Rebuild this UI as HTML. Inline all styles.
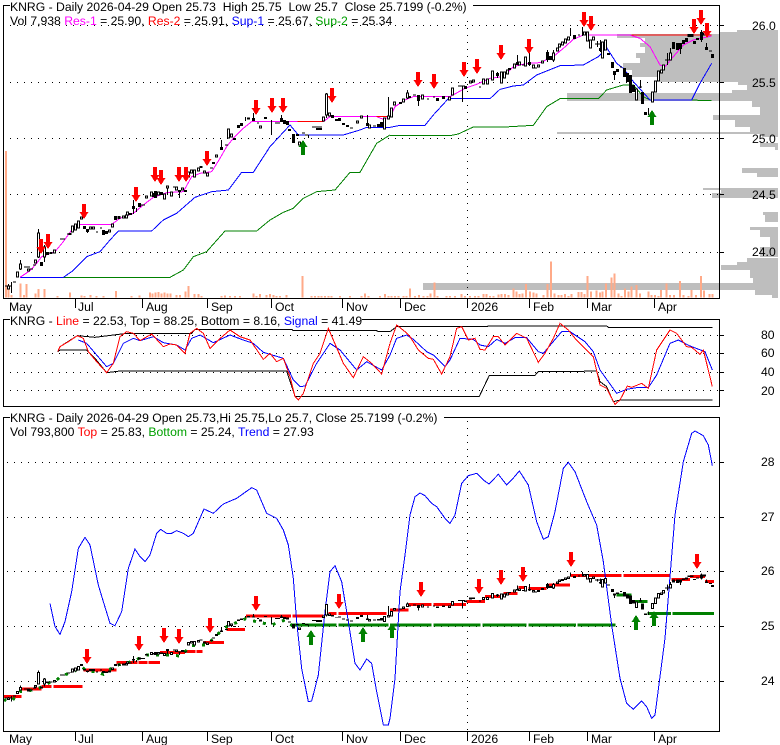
<!DOCTYPE html>
<html><head><meta charset="utf-8"><title>KNRG</title>
<style>
html,body{margin:0;padding:0;background:#fff}
svg{display:block}
text{font-family:"Liberation Sans",Arial,sans-serif;font-size:12.2px;fill:#000}
</style></head><body>
<svg xmlns="http://www.w3.org/2000/svg" width="780" height="745" viewBox="0 0 780 745" shape-rendering="crispEdges">
<defs>
<g id="candles">
<path fill="none" stroke="#000" stroke-width="1" vector-effect="non-scaling-stroke" d="M8.5 284V288M5 286H12M11.5 282V293M13 282H16M20.5 260V270M24 267H30M30 269H33M33 265H36M38.5 229V258M44.5 245V262M60 239H65M67 234H70M87.5 230V233M96 232H98M100 228H102M133.5 200V214M136.5 208V212M141 205H145M179.5 191V198M167.5 186V195M173 187H177M210 168H213M221.5 140V148M225 145H228M245.5 117V121M253.5 113V120M257 123H259M271.5 120V135M275 123H280M281.5 115V122M302 133H305M305 135H308M308.5 135V138M312 127H322M326.5 93V118M350 128H353M367.5 115V126M373 126H376M388.5 97V117M407.5 90V99M413 95H416M418.5 95V106M427 99H429M433 97H435M458 86H465M462.5 86V102M479 87H481M497.5 72V78M517.5 55V65M529.5 52V66M522 65H525M535 68H537M547.5 50V62M553.5 50V62M570.5 28V36M578 35H580M582.5 27V36M597.5 41V47M595 44H600M600.5 40V52M614.5 71V80M620 67H622M640.5 80V88M639 87H642M648.5 108V115M667.5 53V65M665 60H669M670.5 48V60M680.5 49V54M701.5 30V42M706.5 43V50M709 51H712"/>
<path fill="none" stroke="#000" stroke-width="3" d="M41.5 262V266M47.5 252V255M51 252V254M70 233V235M84.5 226V229M87.5 229V232M103.5 230V235M106.5 231V234M115.5 216V220M119 216V219M130.5 213V215M133.5 206V209M139.5 203V207M153.5 193V197M155.5 191V198M161.5 192V195M179.5 190V192M185.5 190V192M201 166V168M213.5 162V164M221.5 147V150M234.5 138V140M238.5 125V128M241.5 123V126M253.5 118V121M265.5 117V119M281.5 118V122M284.5 120V124M287.5 121V125M289.5 129V131M293.5 134V143M297.5 134V136M317.5 128V130M320.5 128V130M332.5 115V118M336.5 119V121M339.5 118V121M343.5 123V125M347.5 125V127M367.5 123V126M378.5 124V127M381.5 122V127M400.5 102V104M409.5 96V98M418.5 95V101M437.5 98V101M443.5 96V99M465.5 86V89M497.5 73V76M509.5 68V70M517.5 62V65M529.5 62V65M547.5 52V60M550.5 56V60M574.5 35V39M600.5 48V51M608.5 53V55M612.5 62V68M614.5 71V75M617.5 69V72M624.5 68V77M627.5 73V82M630.5 75V93M633.5 85V92M642.5 92V104M645.5 112V115M673.5 42V49M677.5 43V50M680.5 43V49M683.5 40V44M686.5 38V42M689 34V37M692 34V37M694.5 41V44M697.5 38V40M701.5 32V40M706.5 47V50M712.5 54V58"/>
<path fill="#fff" stroke="#000" stroke-width="1" vector-effect="non-scaling-stroke" d="M7.5 286h2v3h-2zM16.5 272h2v5h-2zM19.5 264h2v5h-2zM27.5 269h2v2h-2zM34.5 260h2v3h-2zM37.5 233h2v24h-2zM43.5 247h2v10h-2zM53.5 250h2v3h-2zM71.5 226h2v6h-2zM74.5 224h2v6h-2zM77.5 221h2v7h-2zM80.5 217h2v2h-2zM89.5 227h2v2h-2zM92.5 227h2v2h-2zM108.5 230h2v2h-2zM111.5 224h2v3h-2zM122.5 216h2v2h-2zM125.5 215h2v3h-2zM126.5 212h2v3h-2zM145.5 196h2v2h-2zM150.5 192h2v4h-2zM157.5 192h2v3h-2zM163.5 194h2v5h-2zM166.5 186h2v2h-2zM170.5 192h2v4h-2zM175.5 187h2v3h-2zM181.5 188h2v2h-2zM187.5 172h2v5h-2zM190.5 170h2v3h-2zM193.5 170h2v7h-2zM197.5 168h2v3h-2zM203.5 171h2v2h-2zM206.5 173h2v3h-2zM215.5 155h2v2h-2zM227.5 129h2v9h-2zM230.5 134h2v3h-2zM247.5 118h2v1h-2zM259.5 126h2v2h-2zM298.5 142h2v3h-2zM322.5 117h2v4h-2zM325.5 94h2v21h-2zM328.5 113h2v3h-2zM356.5 121h2v2h-2zM360.5 116h2v2h-2zM368.5 125h2v3h-2zM383.5 118h2v11h-2zM387.5 116h2v3h-2zM390.5 108h2v9h-2zM393.5 102h2v3h-2zM402.5 99h2v3h-2zM406.5 93h2v5h-2zM421.5 95h2v4h-2zM448.5 97h2v3h-2zM451.5 88h2v7h-2zM469.5 81h2v2h-2zM472.5 80h2v2h-2zM482.5 79h2v5h-2zM486.5 79h2v5h-2zM491.5 71h2v9h-2zM500.5 72h2v11h-2zM503.5 72h2v6h-2zM506.5 70h2v4h-2zM513.5 64h2v4h-2zM518.5 62h2v3h-2zM524.5 57h2v9h-2zM532.5 65h2v3h-2zM537.5 65h2v2h-2zM541.5 61h2v2h-2zM552.5 53h2v7h-2zM556.5 48h2v3h-2zM558.5 44h2v3h-2zM561.5 42h2v3h-2zM564.5 39h2v4h-2zM567.5 37h2v3h-2zM583.5 32h2v3h-2zM586.5 32h2v9h-2zM589.5 40h2v8h-2zM592.5 37h2v3h-2zM601.5 42h2v16h-2zM604.5 40h2v10h-2zM635.5 89h2v11h-2zM651.5 92h2v10h-2zM654.5 81h2v11h-2zM657.5 71h2v10h-2zM660.5 70h2v3h-2zM662.5 65h2v5h-2zM669.5 53h2v7h-2zM703.5 33h2v2h-2z"/>
</g>
</defs>

<!-- grey price-volume profile -->
<path fill="#bebebe" d="M737 30H778V32H737zM720 32H778V34H720zM617 34H778V38H617zM645 38H778V43H645zM640 43H778V47H640zM645 47H778V53H645zM636 53H778V58H636zM640 58H778V63H640zM623 63H778V70H623zM632 70H778V77H632zM660 77H778V82H660zM738 82H778V85H738zM747 85H778V90H747zM732 90H778V93H732zM567 93H778V101H567zM752 101H778V107H752zM760 107H778V115H760zM713 115H778V120H713zM735 120H778V127H735zM750 127H778V132H750zM557 132H778V134H557zM762 134H778V137H762zM760 143H778V147H760zM775 147H778V150H775zM742 168H778V173H742zM757 173H778V177H757zM703 188H778V190H703zM721 190H778V193H721zM712 193H778V198H712zM763 212H778V215H763zM765 215H778V222H765zM750 227H778V230H750zM760 230H778V237H760zM770 237H778V247H770zM760 247H778V257H760zM747 258H778V262H747zM737 262H778V265H737zM721 265H778V270H721zM750 270H778V278H750zM753 278H778V283H753zM423 283H778V290H423zM755 290H778V295H755zM772 295H778V298H772z"/>

<!-- grid -->
<g stroke="#000" stroke-width="1" stroke-dasharray="1 6" fill="none">
<path d="M10 25.500H719M10 82.500H719M10 138.500H719M10 194.500H719M10 252.500H719"/>
<path d="M10 335.500H719M10 353.500H719M10 372.500H719M10 390.500H719"/>
<path d="M7 462.500H719M7 517.500H719M7 571.500H719M7 626.500H719M7 681.500H719"/>
<path d="M467.500 21V298M467.500 421V731"/>
</g>

<!-- volume bars panel 1 -->
<g fill="none" stroke="#ffaa88" stroke-width="6" transform="scale(.33333)">
<path d="M18 893V453M25 893V855M35 893V885M62 893V850M72 893V885M80 893V852M107 893V880M116 893V867M134 893V867M173 893V888M210 893V878M245 893V886M254 893V888M272 893V885M290 893V888M310 893V888M348 893V873M395 893V888M418 893V886M450 893V878M458 893V880M467 893V878M476 893V876M485 893V880M493 893V878M503 893V880M512 893V880M530 893V885M540 893V885M557 893V875M566 893V858M583 893V882M595 893V882M605 893V888M665 893V888M675 893V886M690 893V888M705 893V888M720 893V888M760 893V880M770 893V888M780 893V882M800 893V885M810 893V882M820 893V885M830 893V888M840 893V888M860 893V885M908 893V828M935 893V888M945 893V888M955 893V888M965 893V888M975 893V888M985 893V888M995 893V888M1020 893V888M1050 893V888M1085 893V888M1095 893V880M1105 893V888M1140 893V888M1155 893V882M1165 893V888"/>
</g>
<g fill="none" stroke="#ffaa88" stroke-width="6" transform="translate(390,0) scale(.33333)">
<path d="M5 893V888M15 893V888M25 893V888M40 893V888M50 893V888M60 893V865M75 893V888M87 893V885M100 893V888M112 893V888M122 893V880M133 893V848M143 893V888M170 893V888M180 893V888M195 893V888M215 893V882M225 893V888M240 893V888M255 893V888M265 893V888M280 893V882M290 893V882M300 893V888M310 893V888M325 893V884M335 893V882M345 893V882M355 893V885M370 893V865M380 893V875M388 893V882M397 893V880M408 893V852M420 893V875M430 893V878M440 893V880M460 893V885M472 893V852M483 893V785M493 893V880M505 893V885M515 893V885M525 893V882M535 893V888M545 893V882M565 893V876M575 893V876M583 893V882M593 893V828M603 893V875M620 893V872M630 893V878M638 893V875M648 893V850M665 893V832M674 893V820M685 893V880M695 893V888M705 893V865M715 893V875M725 893V860M740 893V855M750 893V880M775 893V875M785 893V885M795 893V885M805 893V888M813 893V870M830 893V850M840 893V885M852 893V885M870 893V843M880 893V885M895 893V888M905 893V870M918 893V885M933 893V828M942 893V872M958 893V882M968 893V882"/>
</g>

<!-- panel 1 lines -->
<g fill="none" stroke-width="3" transform="scale(.33333)">
<path stroke="#008000" d="M190 832H510L550 810L580 770L620 755L675 693H770L810 660L850 637L880 625L910 595L950 575L1005 570L1050 517H1080L1130 430L1170 405"/>
<path stroke="#0000ff" d="M60 832H190L215 815L235 795L260 770L300 755L330 720L355 693H455L490 660L530 640L585 592L635 575L685 570L725 517H760L810 440L870 375L895 405H1030L1080 390L1100 382H1170"/>
<path stroke="#ff00ff" d="M60 832L90 812L110 790L125 770L165 755L190 725L215 690L240 673H335L360 655L400 640L430 615L460 592L500 578L550 575L575 530L600 520L635 515L660 475L680 440L700 415L730 385L755 365H970L990 350H1130L1150 358L1170 350"/>
<path stroke="#ff0000" d="M893 365H970M1130 350H1170"/>
</g>
<g fill="none" stroke-width="3" transform="translate(390,0) scale(.33333)">
<path stroke="#008000" d="M0 407H180L205 402L250 381H345L430 376L470 320L510 296H625L650 270L700 255H730L760 290L780 300L965 301"/>
<path stroke="#0000ff" d="M0 382L30 376H105L130 345L175 296H300L330 268L370 258L400 255L440 225L510 197L580 195L625 170L650 143L680 190L700 205L730 245L780 300H905L930 250L965 190"/>
<path stroke="#ff00ff" d="M0 350L15 320L45 300L70 290H180L225 265L260 253L300 235L340 230L370 200L410 190L450 188L490 170L520 145L550 118L580 105H720L750 115L780 140L810 195L825 200L850 170L880 135L910 120L965 108"/>
<path stroke="#ff0000" d="M725 105.500H965"/>
</g>
<use href="#candles"/>
<!-- arrows panel 1 -->
<path fill="#ff0000" d="M39 239h4v8h2.500l-4.500 7-4.500-7h2.500zM46 234h4v8h2.500l-4.500 7-4.500-7h2.500zM82 204h4v8h2.500l-4.500 7-4.500-7h2.500zM134 187h4v8h2.500l-4.500 7-4.500-7h2.500zM153 167h4v8h2.500l-4.500 7-4.500-7h2.500zM159 170h4v8h2.500l-4.500 7-4.500-7h2.500zM177 167h4v8h2.500l-4.500 7-4.500-7h2.500zM184 167h4v8h2.500l-4.500 7-4.500-7h2.500zM205 151h4v8h2.500l-4.500 7-4.500-7h2.500zM254 100h4v8h2.500l-4.500 7-4.500-7h2.500zM270 98h4v8h2.500l-4.500 7-4.500-7h2.500zM281 98h4v8h2.500l-4.500 7-4.500-7h2.500zM330 88h4v8h2.500l-4.500 7-4.500-7h2.500zM416 72h4v8h2.500l-4.500 7-4.500-7h2.500zM432 74h4v8h2.500l-4.500 7-4.500-7h2.500zM462 62h4v8h2.500l-4.500 7-4.500-7h2.500zM475 59h4v8h2.500l-4.500 7-4.500-7h2.500zM499 45h4v8h2.500l-4.500 7-4.500-7h2.500zM527 39h4v8h2.500l-4.500 7-4.500-7h2.500zM582 12h4v8h2.500l-4.500 7-4.500-7h2.500zM589 16h4v8h2.500l-4.500 7-4.500-7h2.500zM692 19h4v8h2.500l-4.500 7-4.500-7h2.500zM699 10h4v8h2.500l-4.500 7-4.500-7h2.500zM705 23h4v8h2.500l-4.500 7-4.500-7h2.500z"/>
<path fill="#008000" d="M303 140l4.500 7h-2.500v8h-4v-8h-2.500zM652 110l4.500 7h-2.500v8h-4v-8h-2.500z"/>

<!-- panel 2 -->
<g fill="none" stroke-width="3" transform="translate(0,300) scale(.33333)">
<path stroke="#000" d="M173 155L180 140L232 107L285 112L380 100H575L585 88H875L880 92H1130L1135 95H1170"/>
<path stroke="#000" d="M173 155L180 150H260L285 175L320 218L360 213H860L885 289H1170"/>
<path stroke="#0000ff" d="M235 120L260 130L290 165L320 200L340 190L370 130L400 115L420 122L460 110L490 128L530 135L555 150L575 115L600 105L640 128L690 105L730 120L760 130L790 157L850 175L880 240L900 260L915 258L950 190L990 130L1020 150L1070 210L1100 185L1145 210L1170 165"/>
<path stroke="#ff0000" d="M173 155L180 140L205 125L232 107L250 115L265 155L290 185L320 218L340 190L360 110L380 95L400 100L420 122L455 102L490 140L510 132L530 135L555 160L570 100L590 85L610 100L630 145L655 120L690 90L720 110L750 120L790 178L810 160L830 185L850 175L870 230L885 290L895 300L910 280L940 190L960 160L985 85L1000 120L1030 190L1060 233L1090 170L1115 190L1145 222L1170 130"/>
</g>
<g fill="none" stroke-width="3" transform="translate(390,300) scale(.33333)">
<path stroke="#000" d="M0 95L20 80H290L295 78H650L655 82H967"/>
<path stroke="#000" d="M0 289H268L298 226H435L445 215H520L620 213L630 245L650 260L670 305L690 300H967"/>
<path stroke="#0000ff" d="M0 165L20 115L50 105L70 118L110 155L130 165L165 200L180 180L210 115L250 118L270 135L295 140L320 118L345 130L375 113H410L445 155L460 160L515 95H540L585 125L610 155L630 210L680 280L710 268L745 262L775 263L800 225L840 130L865 120L900 138L945 155L967 210"/>
<path stroke="#ff0000" d="M0 130L20 75L45 95L60 110L85 150L115 175L130 178L155 222L180 170L200 85L215 80L235 120L255 115L270 148L285 150L310 110H325L345 135L380 100L410 115L445 187L465 160L490 115L510 70L535 90L555 115L590 150L610 170L630 255L650 265L675 313L690 300L712 258L725 262L755 250L775 265L800 150L840 90L860 100L890 140L905 142L930 163L940 150L950 190L967 260"/>
</g>

<!-- panel 3 -->
<g fill="none" stroke="#ff0000" stroke-width="9" transform="translate(0,405) scale(.33333)">
<path d="M10 874H65M65 852H125M125 844H155M160 844H248M250 795H305M305 795H350M350 772H412M415 772H442M445 772H480M480 742H555M560 740H587M590 740H608M610 712H672M680 673H735M738 633H873M877 633H970M985 626H1010M1015 625H1160"/>
</g>
<g fill="none" stroke="#ff0000" stroke-width="9" transform="translate(390,405) scale(.33333)">
<path d="M0 615H55M55 598H125M130 598H228M230 590H285M285 574H335M340 565H382M385 548H410M415 550H470M475 540H540M542 511H695M700 511H842M845 523H900M900 514H945M945 529H972"/>
</g>
<g fill="none" stroke="#008000" stroke-width="9" transform="translate(0,405) scale(.33333)">
<path d="M875 660H1010M1015 660H1165"/>
<path stroke-dasharray="9 21" d="M10 885L35 888L60 860L85 858L120 848L150 832L170 825L185 812L215 803L245 785L262 800L290 800L310 808L345 782L395 770L440 750L490 750L510 750L540 753L575 722L620 720L650 690L680 665L735 642L770 650L815 660L855 645L880 665"/>
</g>
<g fill="none" stroke="#008000" stroke-width="9" transform="translate(390,405) scale(.33333)">
<path d="M0 660H125M130 660H272M277 660H410M415 660H558M563 660H677M680 570H725M725 590H772M772 625H843M847 625H972"/>
</g>
<g fill="none" stroke="#0000ff" stroke-width="3" transform="translate(0,405) scale(.33333)">
<path d="M150 595L165 665L180 688L195 650L215 560L235 430L255 397L270 420L295 540L310 590L330 655L345 662L365 620L385 490L405 432L420 455L435 470L450 450L470 385L482 373L500 385L515 385L530 377L550 385L565 395L580 385L612 312L640 325L670 297L710 280L755 248L770 255L800 325L830 340L850 375L865 420L880 520L890 650L905 790L925 890L935 888L955 810L975 620L990 500L1005 482L1025 530L1045 650L1065 775L1080 795L1100 762L1115 775L1130 860L1150 960L1165 960L1170 940"/>
</g>
<g fill="none" stroke="#0000ff" stroke-width="3" transform="translate(390,405) scale(.33333)">
<path d="M0 940L15 820L30 560L45 450L60 330L75 275L90 264L105 272L125 295L140 305L165 340L180 355L195 330L215 235L235 212L260 205L280 225L297 237L325 208L350 240L365 225L388 198L415 240L440 350L460 403L475 395L495 320L520 190L535 172L555 200L590 290L620 360L640 470L665 660L690 820L710 895L730 913L755 888L770 905L785 940L795 930L825 700L855 330L880 170L905 85L915 78L940 92L955 120L967 182"/>
</g>
<use href="#candles" transform="translate(0,558.800) scale(1,.487)"/>
<path fill="#ff0000" d="M85 649h4v8h2.500l-4.500 7-4.500-7h2.500zM137 636h4v8h2.500l-4.500 7-4.500-7h2.500zM162 628h4v8h2.500l-4.500 7-4.500-7h2.500zM177 629h4v8h2.500l-4.500 7-4.500-7h2.500zM208 618h4v8h2.500l-4.500 7-4.500-7h2.500zM254 596h4v8h2.500l-4.500 7-4.500-7h2.500zM337 594h4v8h2.500l-4.500 7-4.500-7h2.500zM419 582h4v8h2.500l-4.500 7-4.500-7h2.500zM477 579h4v8h2.500l-4.500 7-4.500-7h2.500zM499 570h4v8h2.500l-4.500 7-4.500-7h2.500zM521 567h4v8h2.500l-4.500 7-4.500-7h2.500zM569 552h4v8h2.500l-4.500 7-4.500-7h2.500zM695 554h4v8h2.500l-4.500 7-4.500-7h2.500z"/>
<path fill="#008000" d="M311 630l4.500 7h-2.500v8h-4v-8h-2.500zM363 627l4.500 7h-2.500v8h-4v-8h-2.500zM392 623l4.500 7h-2.500v8h-4v-8h-2.500zM636 615l4.500 7h-2.500v8h-4v-8h-2.500zM654 611l4.500 7h-2.500v8h-4v-8h-2.500z"/>

<!-- frames -->
<g fill="none" stroke="#000" stroke-width="1">
<path d="M10 5.500H3.500V298.500H719.500V5.500H473"/>
<path d="M10 319.500H3.500V406.500H719.500V319.500H362"/>
<path d="M10 417.500H3.500V731.500H719.500V417.500H444"/>
<path d="M75.500 298V308M142.500 298V308M207.500 298V308M271.500 298V308M342.500 298V308M400.500 298V308M467.500 298V308M529.500 298V308M587.500 298V308M654.500 298V308"/>
<path d="M75.500 731V741M142.500 731V741M207.500 731V741M271.500 731V741M342.500 731V741M400.500 731V741M467.500 731V741M529.500 731V741M587.500 731V741M654.500 731V741"/>
<path d="M720 25.500H724M720 82.500H724M720 138.500H724M720 194.500H724M720 252.500H724M720 335.500H724M720 353.500H724M720 372.500H724M720 390.500H724M720 462.500H724M720 517.500H724M720 571.500H724M720 626.500H724M720 681.500H724"/>
</g>

<!-- text -->
<g shape-rendering="auto">
<text x="10" y="11" xml:space="preserve">KNRG - Daily 2026-04-29 Open 25.73  High 25.75  Low 25.7  Close 25.7199 (-0.2%)</text>
<text x="10" y="25">Vol 7,938 <tspan fill="#ff00ff">Res-1</tspan> = 25.90, <tspan fill="#ff0000">Res-2</tspan> = 25.91, <tspan fill="#0000ff">Sup-1</tspan> = 25.67, <tspan fill="#00a000">Sup-2</tspan> = 25.34</text>
<text x="10" y="325">KNRG - <tspan fill="#ff0000">Line</tspan> = 22.53, Top = 88.25, Bottom = 8.16, <tspan fill="#0000ff">Signal</tspan> = 41.49</text>
<text x="10" y="422">KNRG - Daily 2026-04-29 Open 25.73,Hi 25.75,Lo 25.7, Close 25.7199 (-0.2%)</text>
<text x="10" y="436">Vol 793,800 <tspan fill="#ff0000">Top</tspan> = 25.83, <tspan fill="#00a000">Bottom</tspan> = 25.24, <tspan fill="#0000ff">Trend</tspan> = 27.93</text>

<text x="752" y="30">26.0</text><text x="752" y="87">25.5</text><text x="752" y="143">25.0</text><text x="752" y="199">24.5</text><text x="752" y="256">24.0</text>
<text x="761" y="339">80</text><text x="761" y="357">60</text><text x="761" y="376">40</text><text x="761" y="395">20</text>
<text x="761" y="466">28</text><text x="761" y="521">27</text><text x="761" y="575">26</text><text x="761" y="630">25</text><text x="761" y="685">24</text>

<text x="9" y="311">May</text><text x="78" y="311">Jul</text><text x="146" y="311">Aug</text><text x="211" y="311">Sep</text><text x="275" y="311">Oct</text><text x="346" y="311">Nov</text><text x="404" y="311">Dec</text><text x="471" y="311">2026</text><text x="533" y="311">Feb</text><text x="591" y="311">Mar</text><text x="658" y="311">Apr</text>
<text x="9" y="743">May</text><text x="78" y="743">Jul</text><text x="146" y="743">Aug</text><text x="211" y="743">Sep</text><text x="275" y="743">Oct</text><text x="346" y="743">Nov</text><text x="404" y="743">Dec</text><text x="471" y="743">2026</text><text x="533" y="743">Feb</text><text x="591" y="743">Mar</text><text x="658" y="743">Apr</text>
</g>
</svg>
</body></html>
